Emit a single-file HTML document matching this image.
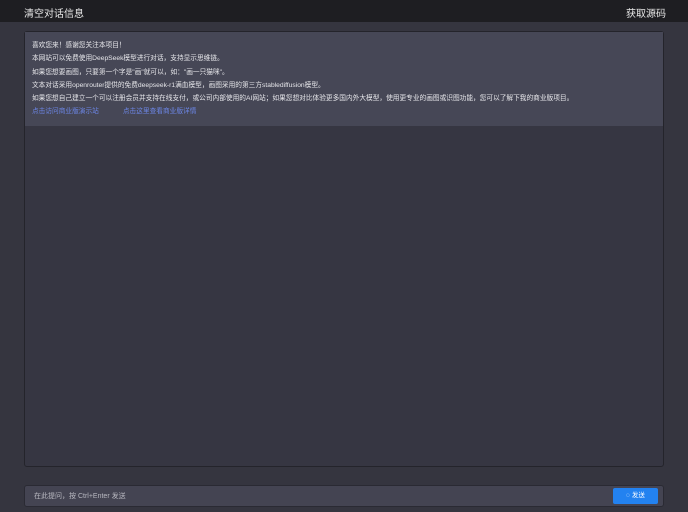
<!DOCTYPE html>
<html><head><meta charset="utf-8"><style>
*{margin:0;padding:0;box-sizing:border-box}
body{width:688px;height:512px;overflow:hidden;background:#35353f;font-family:"Liberation Sans","Noto Sans CJK SC",sans-serif;position:relative}
.hd{position:absolute;left:0;top:0;width:688px;height:22px;background:#1e1e22;color:#e8e8e8;font-size:10px}
.hd span{position:absolute;top:5px}
.box{position:absolute;left:24px;top:31px;width:640px;height:436px;border:1px solid #24242b;background:#363642;border-radius:3px}
.msg{background:#464756;height:94px;padding:7px 7px;font-size:6.7px;color:#e6e6ea;line-height:13.3px}
.msg a{color:#6c86e6;text-decoration:none;margin-right:24px}
.in{position:absolute;left:24px;top:485px;width:640px;height:22px;background:#444452;border:1px solid #2a2a33;border-radius:3px;font-size:7px;color:#b8b8c0;padding:5px 9px}
.btn{position:absolute;left:613px;top:488px;width:45px;height:16px;background:#2382f0;border-radius:2px;color:#fff;font-size:6.5px;text-align:center;line-height:16px}
</style></head><body>
<div class="hd"><span style="left:24px">清空对话信息</span><span style="left:626px">获取源码</span></div>
<div class="box"><div class="msg">
喜欢您来！感谢您关注本项目！<br>
本网站可以免费使用DeepSeek模型进行对话，支持显示思维链。<br>
如果您想要画图，只要第一个字是"画"就可以，如："画一只猫咪"。<br>
文本对话采用openrouter提供的免费deepseek-r1满血模型，画图采用的第三方stablediffusion模型。<br>
如果您想自己建立一个可以注册会员并支持在线支付，或公司内部使用的AI网站；如果您想对比体验更多国内外大模型，使用更专业的画图或识图功能，您可以了解下我的商业版项目。<br>
<a>点击访问商业版演示站</a><a>点击这里查看商业版详情</a>
</div></div>
<div class="in">在此提问，按 Ctrl+Enter 发送</div>
<div class="btn">◌ 发送</div>
</body></html>
